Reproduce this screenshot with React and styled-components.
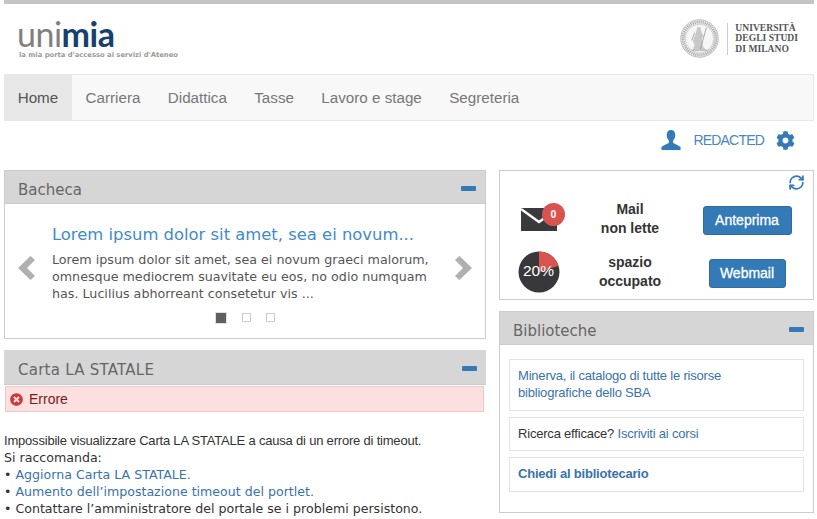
import React from "react";
import styled, { createGlobalStyle } from "styled-components";
import { FaCog, FaTimesCircle } from "react-icons/fa";
import { RefreshCw } from "lucide-react";

const Global = createGlobalStyle`
	html, body {
		margin: 0;
		background: #fff;
		font-family: "Liberation Sans", Arial, sans-serif;
		font-size: 14px;
		color: #333;
	}
`;

const Page = styled.div`
	width: 810px;
	height: 519px;
	margin-left: 4px;
	overflow: hidden;
	border-top: 4px solid #c4c4c4;
	box-sizing: border-box;
`;

const Header = styled.div`
	display: flex;
	justify-content: space-between;
	height: 70px;
`;

const LogoBox = styled.div`
	padding: 12px 0 0 13px;
`;

const LogoWord = styled.div`
	font-family: "Lato", sans-serif;
	font-size: 34px;
	line-height: 35px;
	letter-spacing: -0.5px;
	color: #808080;
	span {
		color: #16416e;
		font-weight: bold;
	}
`;

const LogoTag = styled.div`
	font-family: "DejaVu Sans", sans-serif;
	font-size: 6.8px;
	line-height: 9px;
	font-weight: bold;
	color: #9a9a9a;
	margin: 0 0 0 2px;
	white-space: nowrap;
`;

const Uni = styled.div`
	display: flex;
	align-items: center;
	padding: 15px 16px 0 0;
	height: 39px;
`;

const UniName = styled.div`
	font-family: "Liberation Serif", serif;
	font-size: 9.6px;
	line-height: 10.5px;
	font-weight: bold;
	color: #555;
	margin-left: 8px;
	padding-left: 7px;
	border-left: 1px solid #ccc;
	height: 32px;
	display: flex;
	flex-direction: column;
	justify-content: center;
`;

const Nav = styled.div`
	display: flex;
	height: 47px;
	box-sizing: border-box;
	background: #f8f8f8;
	border: 1px solid #e7e7e7;
	border-left: 0;
`;

const NavItem = styled.div`
	display: flex;
	align-items: center;
	padding: 0 13.7px;
	font-size: 15.2px;
	color: ${(p) => (p.$active ? "#555" : "#777")};
	background: ${(p) => (p.$active ? "#e7e7e7" : "transparent")};
`;

const UserRow = styled.div`
	display: flex;
	align-items: center;
	justify-content: flex-end;
	height: 49px;
	padding-right: 19px;
	padding-bottom: 11px;
	box-sizing: border-box;
	color: #337ab7;
`;

const UserName = styled.span`
	font-size: 14px;
	letter-spacing: -0.8px;
	margin: 0 12px;
	color: #4a86c0;
`;

const Columns = styled.div`
	display: grid;
	grid-template-columns: 482px 315px;
	gap: 13px;
`;

const Column = styled.div`
	display: flex;
	flex-direction: column;
	gap: 11px;
`;

const Panel = styled.div`
	border: 1px solid #ccc;
	height: ${(p) => p.$h}px;
	box-sizing: border-box;
`;

const PanelHead = styled.div`
	display: flex;
	align-items: center;
	justify-content: space-between;
	height: ${(p) => p.$h || 33}px;
	padding: 6px 9px 0 13px;
	background: #d6d6d6;
	border-bottom: 1px solid #ccc;
	box-sizing: border-box;
	font-family: "DejaVu Sans", sans-serif;
	font-size: 15px;
	color: #666;
`;

const WideTitle = styled.span`
	margin-left: 1px;
	letter-spacing: 0.25px;
`;

const Minus = styled.span`
	width: 15px;
	height: 5px;
	margin-bottom: 4px;
	background: #337ab7;
	border-radius: 1px;
`;

const Carousel = styled.div`
	display: grid;
	grid-template-columns: 47px 1fr 48px;
	align-items: center;
	height: 134px;
	color: #b0b0b0;
	font-family: "DejaVu Sans", sans-serif;
`;

const Arrow = styled.div`
	display: flex;
	padding-left: ${(p) => p.$pl}px;
	padding-bottom: 7px;
`;

const Slide = styled.div`
	padding-top: 4px;
`;

const SlideTitle = styled.div`
	font-size: 16.4px;
	line-height: 24px;
	color: #428bca;
	white-space: nowrap;
`;

const SlideText = styled.div`
	font-size: 12.7px;
	line-height: 17px;
	margin-top: 4px;
	color: #555;
	white-space: nowrap;
`;

const Dots = styled.div`
	display: flex;
	justify-content: center;
	align-items: center;
	gap: 15px;
	margin-top: 10px;
`;

const Dot = styled.span`
	width: ${(p) => (p.$on ? 12 : 9)}px;
	height: ${(p) => (p.$on ? 12 : 9)}px;
	box-sizing: border-box;
	background: ${(p) => (p.$on ? "#606060" : "#fff")};
	border: 1px solid ${(p) => (p.$on ? "#e0e0e0" : "#ccc")};
`;

const Alert = styled.div`
	display: flex;
	align-items: center;
	gap: 6px;
	height: 26px;
	margin: 1px 2px 0 1px;
	padding-left: 4px;
	box-sizing: border-box;
	background: #fce0e0;
	border: 1px solid #efc8c8;
	color: #7a1a1a;
	font-size: 14px;
`;

const Message = styled.div`
	margin-top: 20px;
	font-family: "DejaVu Sans", sans-serif;
	font-size: 12.6px;
	line-height: 17px;
	color: #333;
	white-space: nowrap;
`;

const Lead = styled.div`
	font-family: "Liberation Sans", sans-serif;
	font-size: 13px;
	letter-spacing: -0.2px;
`;

const Link = styled.span`
	color: #3a72ab;
`;

const MailBox = styled.div`
	height: 130px;
	border: 1px solid #ccc;
	box-sizing: border-box;
	position: relative;
`;

const Refresh = styled.div`
	position: absolute;
	top: 3px;
	right: 8px;
	color: #337ab7;
	line-height: 0;
`;

const MailRow = styled.div`
	display: grid;
	grid-template-columns: 78px 104px 1fr;
	align-items: center;
	height: 46px;
	text-align: center;
	font-weight: bold;
	font-size: 14px;
	line-height: 19px;
	color: #333;
`;

const MailRows = styled.div`
	display: flex;
	flex-direction: column;
	gap: 7px;
	padding-top: 25px;
`;

const Graphic = styled.div`
	display: flex;
	justify-content: center;
	position: relative;
`;

const Badge = styled.span`
	position: absolute;
	top: -5px;
	left: 42px;
	width: 23px;
	height: 23px;
	border-radius: 50%;
	background: #d9534f;
	color: #fff;
	font-size: 10.5px;
	line-height: 23px;
`;

const PieLabel = styled.span`
	position: absolute;
	left: -1px;
	right: 0;
	top: 10px;
	font-weight: normal;
	font-size: 15.5px;
	color: #fff;
`;

const Button = styled.div`
	justify-self: center;
	position: relative;
	top: 1px;
	width: ${(p) => p.$w}px;
	height: 29px;
	margin-left: -1px;
	background: #337ab7;
	border: 1px solid #2e6da4;
	border-radius: 3px;
	box-sizing: border-box;
	color: #fff;
	font-weight: normal;
	-webkit-text-stroke: 0.3px #fff;
	font-size: 14px;
	line-height: 27px;
`;

const LibBody = styled.div`
	display: flex;
	flex-direction: column;
	gap: 6px;
	padding: 14px 9px 0;
`;

const LibItem = styled.div`
	border: 1px solid #e3e3e3;
	padding: 7px 8px;
	font-size: 13px;
	line-height: 17px;
	height: ${(p) => p.$h}px;
	box-sizing: border-box;
	color: #333;
	letter-spacing: -0.2px;
`;

const Seal = () => (
	<svg width="39" height="39" viewBox="0 0 40 40">
		<circle cx="20" cy="20" r="19.2" fill="#f2f2f2" stroke="#a8a8a8" strokeWidth="0.8" />
		<circle cx="20" cy="20" r="16.8" fill="none" stroke="#aaa" strokeWidth="3" strokeDasharray="1.2 0.9" />
		<circle cx="20" cy="20" r="14.6" fill="#f6f6f6" stroke="#b5b5b5" strokeWidth="0.6" />
		<path d="M18 8l3 .5 1 5 2.5 4-2 2 1 9 3 3H13l2-5-2-4 3-7z" fill="#c8c8c8" />
		<path d="M27 9l-6 22M12 32h16M15 14l-3 8" stroke="#a0a0a0" strokeWidth="0.9" fill="none" />
	</svg>
);

const UserIcon = () => (
	<svg width="20" height="20" viewBox="0 0 20 21">
		<path
			d="M10 0c3 0 4.5 2.2 4.5 5.2 0 2.4-1 4.6-2.3 5.8v2c0 1 4.8 2.4 7.8 4.6V21H0v-3.4C3 15.4 7.8 14 7.8 13v-2C6.5 9.8 5.5 7.6 5.5 5.2 5.5 2.2 7 0 10 0z"
			fill="#337ab7"
		/>
	</svg>
);

const Chevron = ({ flip }) => (
	<svg width="17" height="24" viewBox="0 0 17 24">
		<path d={flip ? "M0 4L4.5 0 17 12 4.5 24 0 20 8 12z" : "M17 4L12.5 0 0 12l12.5 12L17 20 9 12z"} fill="#b0b0b0" />
	</svg>
);

const Envelope = () => (
	<svg width="37" height="23" viewBox="0 0 37 23">
		<rect width="36" height="23" fill="#3a3a3c" />
		<path d="M0 1l18 13L36 1" fill="none" stroke="#fff" strokeWidth="2.5" />
	</svg>
);

const Pie = () => (
	<svg width="42" height="42" viewBox="0 0 42 42">
		<circle cx="21" cy="21" r="20.5" fill="#38383a" />
		<path d="M21 21V.5A20.5 20.5 0 0 1 40.5 14.7z" fill="#d9534f" />
	</svg>
);

const App = () => {
	return (
		<Page>
			<Global />
			<Header>
				<LogoBox>
					<LogoWord>
						uni<span>mia</span>
					</LogoWord>
					<LogoTag>la mia porta d'accesso ai servizi d'Ateneo</LogoTag>
				</LogoBox>
				<Uni>
					<Seal />
					<UniName>
						<div>UNIVERSITÀ</div>
						<div>DEGLI STUDI</div>
						<div>DI MILANO</div>
					</UniName>
				</Uni>
			</Header>
			<Nav>
				<NavItem $active>Home</NavItem>
				<NavItem>Carriera</NavItem>
				<NavItem>Didattica</NavItem>
				<NavItem>Tasse</NavItem>
				<NavItem>Lavoro e stage</NavItem>
				<NavItem>Segreteria</NavItem>
			</Nav>
			<UserRow>
				<UserIcon />
				<UserName>REDACTED</UserName>
				<FaCog size={19} />
			</UserRow>
			<Columns>
				<Column>
					<Panel $h={169}>
						<PanelHead>
							Bacheca
							<Minus />
						</PanelHead>
						<Carousel>
							<Arrow $pl={13}>
								<Chevron />
							</Arrow>
							<Slide>
								<SlideTitle>Lorem ipsum dolor sit amet, sea ei novum...</SlideTitle>
								<SlideText>
									Lorem ipsum dolor sit amet, sea ei novum graeci malorum,
									<br />
									omnesque mediocrem suavitate eu eos, no odio numquam
									<br />
									has. Lucilius abhorreant consetetur vis ...
								</SlideText>
								<Dots>
									<Dot $on />
									<Dot />
									<Dot />
								</Dots>
							</Slide>
							<Arrow $pl={18}>
								<Chevron flip />
							</Arrow>
						</Carousel>
					</Panel>
					<div>
						<PanelHead $h={35}>
							<WideTitle>Carta LA STATALE</WideTitle>
							<Minus />
						</PanelHead>
						<Alert>
							<FaTimesCircle size={13} color="#cc3b3b" />
							Errore
						</Alert>
						<Message>
							<Lead>Impossibile visualizzare Carta LA STATALE a causa di un errore di timeout.</Lead>
							Si raccomanda:
							<br />• <Link>Aggiorna Carta LA STATALE.</Link>
							<br />• <Link>Aumento dell’impostazione timeout del portlet.</Link>
							<br />• Contattare l’amministratore del portale se i problemi persistono.
						</Message>
					</div>
				</Column>
				<Column>
					<MailBox>
						<Refresh>
							<RefreshCw size={17} strokeWidth={2.4} />
						</Refresh>
						<MailRows>
							<MailRow>
								<Graphic>
									<Envelope />
									<Badge>0</Badge>
								</Graphic>
								<div>
									Mail
									<br />
									non lette
								</div>
								<Button $w={89}>Anteprima</Button>
							</MailRow>
							<MailRow>
								<Graphic>
									<Pie />
									<PieLabel>20%</PieLabel>
								</Graphic>
								<div>
									spazio
									<br />
									occupato
								</div>
								<Button $w={77}>Webmail</Button>
							</MailRow>
						</MailRows>
					</MailBox>
					<Panel $h={202}>
						<PanelHead>
							Biblioteche
							<Minus />
						</PanelHead>
						<LibBody>
							<LibItem $h={52}>
								<Link>
									Minerva, il catalogo di tutte le risorse
									<br />
									bibliografiche dello SBA
								</Link>
							</LibItem>
							<LibItem $h={34}>
								Ricerca efficace? <Link>Iscriviti ai corsi</Link>
							</LibItem>
							<LibItem $h={35}>
								<Link as="b">Chiedi al bibliotecario</Link>
							</LibItem>
						</LibBody>
					</Panel>
				</Column>
			</Columns>
		</Page>
	);
};

export default App;
